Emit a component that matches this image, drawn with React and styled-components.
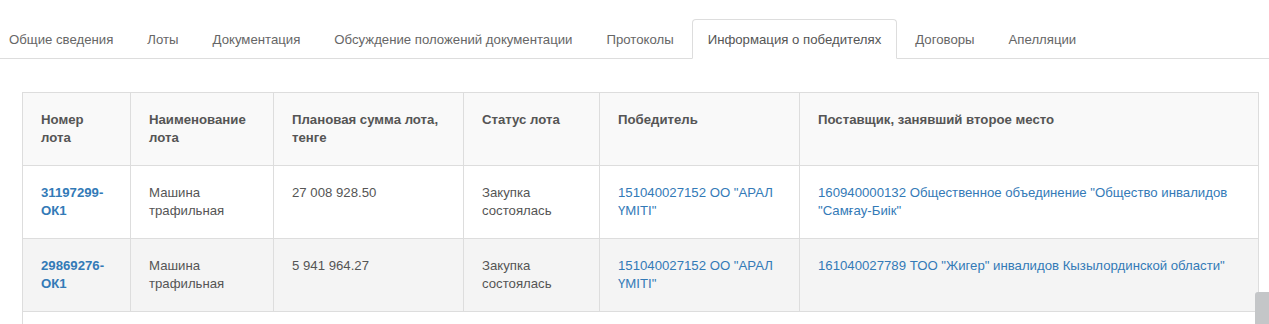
import styled, { createGlobalStyle } from "styled-components";

const GlobalStyle = createGlobalStyle`
  html, body {
    margin: 0;
    padding: 0;
    background: #fff;
  }
  body {
    font-family: "Liberation Sans", Arial, sans-serif;
    font-size: 13.2px;
    color: #555;
  }
`;

const tabs = [
  "Общие сведения",
  "Лоты",
  "Документация",
  "Обсуждение положений документации",
  "Протоколы",
  "Информация о победителях",
  "Договоры",
  "Апелляции",
];

const columns = [
  { title: "Номер лота", width: 108 },
  { title: "Наименование лота", width: 143 },
  { title: "Плановая сумма лота, тенге", width: 190 },
  { title: "Статус лота", width: 136 },
  { title: "Победитель", width: 200 },
  { title: "Поставщик, занявший второе место" },
];

const rows = [
  {
    lot: "31197299-ОК1",
    name: "Машина трафильная",
    sum: "27 008 928.50",
    status: "Закупка состоялась",
    winner: '151040027152 ОО "АРАЛ ҮМІТІ"',
    second:
      '160940000132 Общественное объединение "Общество инвалидов "Самғау-Биік"',
  },
  {
    lot: "29869276-ОК1",
    name: "Машина трафильная",
    sum: "5 941 964.27",
    status: "Закупка состоялась",
    winner: '151040027152 ОО "АРАЛ ҮМІТІ"',
    second: '161040027789 ТОО "Жигер" инвалидов Кызылординской области"',
  },
];

function App() {
  return (
    <Page>
      <GlobalStyle />
      <TabList>
        {tabs.map((t) => (
          <Tab key={t} $active={t === "Информация о победителях"}>
            {t}
          </Tab>
        ))}
      </TabList>

      <Content>
        <Table>
          <colgroup>
            {columns.map((c) => (
              <col key={c.title} style={c.width ? { width: c.width } : undefined} />
            ))}
          </colgroup>
          <thead>
            <tr>
              {columns.map((c) => (
                <Th key={c.title}>{c.title}</Th>
              ))}
            </tr>
          </thead>
          <tbody>
            {rows.map((r, i) => (
              <Row key={r.lot} $striped={i % 2 === 1}>
                <Td>
                  <LotLink href="#">{r.lot}</LotLink>
                </Td>
                <Td>{r.name}</Td>
                <Td>{r.sum}</Td>
                <Td>{r.status}</Td>
                <Td>
                  <Link href="#">{r.winner}</Link>
                </Td>
                <Td>
                  <Link href="#">{r.second}</Link>
                </Td>
              </Row>
            ))}
            <Row>
              <EmptyTd colSpan={6} />
            </Row>
          </tbody>
        </Table>
      </Content>

      <ScrollTop />
    </Page>
  );
}

export default App;

const Page = styled.div`
  position: relative;
  width: 100%;
  height: 324px;
  overflow: hidden;
`;

const TabList = styled.ul`
  display: flex;
  margin: 0 0 0 -7px;
  padding: 19px 0 0 0;
  list-style: none;
  border-bottom: 1px solid #ddd;
  height: 39px;
  box-sizing: content-box;
`;

const Tab = styled.li`
  padding: 10px 15px 9px;
  margin-right: 2px;
  margin-bottom: -1px;
  line-height: 20px;
  font-size: 13.2px;
  color: ${({ $active }) => ($active ? "#555" : "#666")};
  background: ${({ $active }) => ($active ? "#fff" : "transparent")};
  border: 1px solid ${({ $active }) => ($active ? "#ddd" : "transparent")};
  border-bottom-color: ${({ $active }) => ($active ? "#fff" : "transparent")};
  border-radius: 4px 4px 0 0;
  white-space: nowrap;
`;

const Content = styled.div`
  padding: 33px 10px 0 22px;
`;

const Table = styled.table`
  width: 1237px;
  border-collapse: collapse;
  table-layout: fixed;
  border: 1px solid #ddd;
`;

const Th = styled.th`
  background: #f9f9f9;
  border: 1px solid #ddd;
  padding: 18px 18px 17px;
  height: 73px;
  box-sizing: border-box;
  text-align: left;
  vertical-align: top;
  font-weight: bold;
  font-size: 13.2px;
  line-height: 18px;
  color: #555;
`;

const Row = styled.tr`
  background: ${({ $striped }) => ($striped ? "#f4f4f4" : "#fff")};
`;

const Td = styled.td`
  border: 1px solid #ddd;
  padding: 18px 18px 17px;
  height: 73px;
  box-sizing: border-box;
  vertical-align: top;
  font-size: 13.2px;
  line-height: 18px;
  color: #555;
`;

const EmptyTd = styled.td`
  border: 1px solid #ddd;
  height: 40px;
`;

const Link = styled.a`
  color: #337ab7;
  text-decoration: none;
`;

const LotLink = styled(Link)`
  font-weight: bold;
`;

const ScrollTop = styled.div`
  position: absolute;
  left: 1255px;
  top: 292px;
  width: 20px;
  height: 40px;
  background: #c4c6c8;
  border-radius: 3px 0 0 0;
`;
